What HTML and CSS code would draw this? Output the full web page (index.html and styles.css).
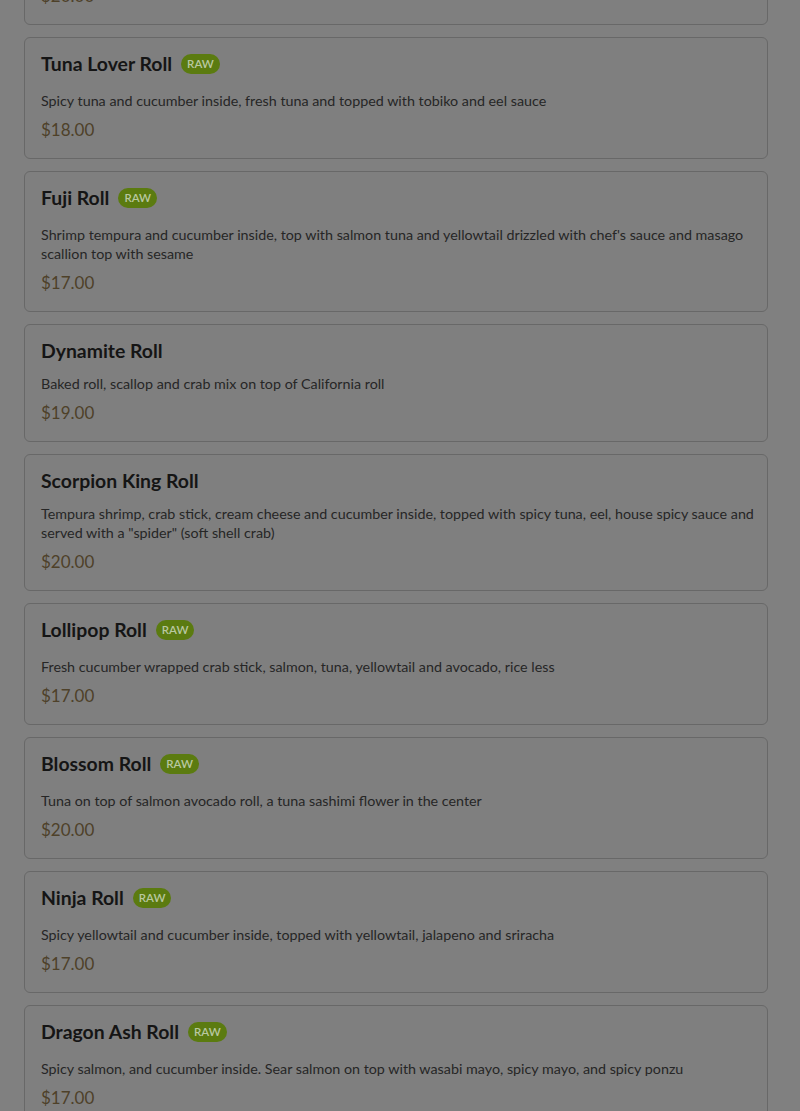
FILE: index.html
```html
<!DOCTYPE html>
<html lang="en">
<head>
<meta charset="utf-8">
<title>Menu</title>
<link rel="stylesheet" href="styles.css">
</head>
<body>
<main class="menu">
  <article class="item item-cut">
    <div class="head"><h3 class="name">&nbsp;</h3></div>
    <p class="desc">&nbsp;</p>
    <div class="price">$20.00</div>
  </article>
  <article class="item">
    <div class="head badged"><h3 class="name">Tuna Lover Roll</h3><span class="badge">RAW</span></div>
    <p class="desc">Spicy tuna and cucumber inside, fresh tuna and topped with tobiko and eel sauce</p>
    <div class="price">$18.00</div>
  </article>
  <article class="item">
    <div class="head badged"><h3 class="name">Fuji Roll</h3><span class="badge">RAW</span></div>
    <p class="desc">Shrimp tempura and cucumber inside, top with salmon tuna and yellowtail drizzled with chef's sauce and masago scallion top with sesame</p>
    <div class="price">$17.00</div>
  </article>
  <article class="item">
    <div class="head"><h3 class="name">Dynamite Roll</h3></div>
    <p class="desc">Baked roll, scallop and crab mix on top of California roll</p>
    <div class="price">$19.00</div>
  </article>
  <article class="item">
    <div class="head"><h3 class="name">Scorpion King Roll</h3></div>
    <p class="desc">Tempura shrimp, crab stick, cream cheese and cucumber inside, topped with spicy tuna, eel, house spicy sauce and served with a "spider" (soft shell crab)</p>
    <div class="price">$20.00</div>
  </article>
  <article class="item">
    <div class="head badged"><h3 class="name">Lollipop Roll</h3><span class="badge">RAW</span></div>
    <p class="desc">Fresh cucumber wrapped crab stick, salmon, tuna, yellowtail and avocado, rice less</p>
    <div class="price">$17.00</div>
  </article>
  <article class="item">
    <div class="head badged"><h3 class="name">Blossom Roll</h3><span class="badge">RAW</span></div>
    <p class="desc">Tuna on top of salmon avocado roll, a tuna sashimi flower in the center</p>
    <div class="price">$20.00</div>
  </article>
  <article class="item">
    <div class="head badged"><h3 class="name">Ninja Roll</h3><span class="badge">RAW</span></div>
    <p class="desc">Spicy yellowtail and cucumber inside, topped with yellowtail, jalapeno and sriracha</p>
    <div class="price">$17.00</div>
  </article>
  <article class="item">
    <div class="head badged"><h3 class="name">Dragon Ash Roll</h3><span class="badge">RAW</span></div>
    <p class="desc">Spicy salmon, and cucumber inside. Sear salmon on top with wasabi mayo, spicy mayo, and spicy ponzu</p>
    <div class="price">$17.00</div>
  </article>
</main>
</body>
</html>
```
FILE: styles.css
```css
html, body {
  margin: 0;
  padding: 0;
  background: #808080;
  height: 1111px;
  overflow: hidden;
}
body {
  font-family: "Lato", "Noto Sans", sans-serif;
  color: #222;
}
.menu {
  display: flex;
  flex-direction: column;
  gap: 12px;
  padding: 0 32px 0 24px;
  margin-top: -93px;
}
.item {
  border: 1px solid #686868;
  border-radius: 6px;
  background: #7f7f7f;
  padding: 15px 8px 17px 16px;
  box-sizing: border-box;
}
.head {
  display: flex;
  align-items: center;
  gap: 10px;
  height: 22px;
}
.head.badged {
  padding-bottom: 4px;
  align-items: flex-start;
}
.name {
  margin: 0;
  font-size: 19.4px;
  line-height: 22px;
  font-weight: 700;
  color: #151515;
}
.badge {
  display: inline-block;
  margin-top: 1px;
  margin-left: -1px;
  background: #5b7b10;
  color: #b9c8a0;
  font-size: 11.5px;
  line-height: 20px;
  height: 20px;
  padding: 0 6px;
  border-radius: 10px;
  font-weight: 600;
}
.desc {
  margin: 12px 0 0;
  font-size: 14.3px;
  line-height: 19px;
  color: #262626;
}
.price {
  margin-top: 9px;
  font-size: 17px;
  line-height: 22px;
  color: #4e4129;
}
```
